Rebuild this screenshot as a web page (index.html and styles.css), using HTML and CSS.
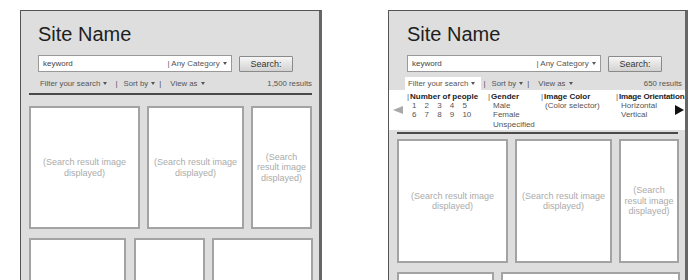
FILE: index.html
```
<!DOCTYPE html>
<html>
<head>
<meta charset="utf-8">
<title>Search wireframes</title>
<link rel="stylesheet" href="styles.css">
</head>
<body>
<div class="panel panel-left">
  <div class="head">
    <h1 class="site">Site Name</h1>
    <div class="search">
      <div class="input"><span class="kw">keyword</span><span class="cat">| Any Category <i class="caret"></i></span></div>
      <div class="btn">Search:</div>
    </div>
  </div>
  <div class="toolbar">
    <span class="tab">Filter your search <i class="caret"></i></span>
    <span class="sep">|</span>
    <span class="item">Sort by <i class="caret"></i></span>
    <span class="sep sep-tight">|</span>
    <span class="item">View as <i class="caret"></i></span>
    <span class="count">1,500 results</span>
  </div>
  <div class="rule"></div>
  <div class="row row1">
    <div class="card"><span>(Search result image displayed)</span></div>
    <div class="card"><span>(Search result image displayed)</span></div>
    <div class="card"><span>(Search result image displayed)</span></div>
  </div>
  <div class="row row2">
    <div class="card"></div>
    <div class="card"></div>
    <div class="card"></div>
  </div>
</div>

<div class="panel panel-right">
  <div class="head">
    <h1 class="site">Site Name</h1>
    <div class="search">
      <div class="input"><span class="kw">keyword</span><span class="cat">| Any Category <i class="caret"></i></span></div>
      <div class="btn">Search:</div>
    </div>
  </div>
  <div class="toolbar">
    <span class="tab tab-open">Filter your search <i class="caret"></i></span>
    <span class="sep">|</span>
    <span class="item">Sort by <i class="caret"></i></span>
    <span class="sep sep-tight">|</span>
    <span class="item">View as <i class="caret"></i></span>
    <span class="count">650 results</span>
  </div>
  <div class="filters">
    <i class="arrow-left"></i>
    <div class="fcol fcol-people">
      <div class="fhead"><span class="bar">|</span>Number of people</div>
      <div class="nums">
        <span>1</span><span>2</span><span>3</span><span>4</span><span>5</span>
        <span>6</span><span>7</span><span>8</span><span>9</span><span>10</span>
      </div>
    </div>
    <div class="fcol fcol-gender">
      <div class="fhead"><span class="bar">|</span>Gender</div>
      <div class="fitem">Male</div>
      <div class="fitem">Female</div>
      <div class="fitem">Unspecified</div>
    </div>
    <div class="fcol fcol-color">
      <div class="fhead"><span class="bar">|</span>Image Color</div>
      <div class="fitem">(Color selector)</div>
    </div>
    <div class="fcol fcol-orient">
      <div class="fhead"><span class="bar">|</span>Image Orientation</div>
      <div class="fitem">Horizontal</div>
      <div class="fitem">Vertical</div>
    </div>
    <i class="arrow-right"></i>
  </div>
  <div class="rule"></div>
  <div class="row row1">
    <div class="card"><span>(Search result image displayed)</span></div>
    <div class="card"><span>(Search result image displayed)</span></div>
    <div class="card"><span>(Search result image displayed)</span></div>
  </div>
  <div class="row row2">
    <div class="card"></div>
    <div class="card"></div>
  </div>
</div>
</body>
</html>
```
FILE: styles.css
```
html, body {
  margin: 0;
  padding: 0;
  background: #ffffff;
}
body {
  width: 700px;
  height: 280px;
  overflow: hidden;
  display: flex;
  align-items: flex-start;
  gap: 66px;
  padding: 10px 0 0 20px;
  box-sizing: border-box;
  font-family: "Liberation Sans", Arial, sans-serif;
  color: #333;
}
.panel {
  box-sizing: border-box;
  height: 300px;
  flex: none;
  background: #dedede;
  border: 1px solid #555;
  border-right: 3px solid #666;
  display: flex;
  flex-direction: column;
}
.panel > * { flex: none; }
.panel-left { width: 302px; }
.panel-right { width: 300px; }

.head {
  padding: 11px 0 0 17px;
}
.panel-right .head { padding-left: 18px; }
.site {
  margin: 0;
  font-size: 20px;
  line-height: 24px;
  font-weight: normal;
  color: #1e1e1e;
}
.search {
  display: flex;
  align-items: flex-start;
  gap: 7px;
  margin-top: 9px;
}
.input {
  box-sizing: border-box;
  width: 194px;
  height: 17px;
  background: #fff;
  border: 1px solid #999;
  display: flex;
  align-items: center;
  justify-content: space-between;
  padding: 0 4px;
  font-size: 8px;
  color: #444;
}
.cat { color: #555; }
.caret {
  display: inline-block;
  width: 0;
  height: 0;
  border-left: 2.5px solid transparent;
  border-right: 2.5px solid transparent;
  border-top: 3px solid #555;
  vertical-align: 1px;
  margin-left: 1px;
}
.btn {
  box-sizing: border-box;
  margin-top: 1px;
  width: 54px;
  height: 16px;
  border: 1px solid #8a8a8a;
  border-radius: 1px;
  background: linear-gradient(#f6f6f6, #d2d2d2);
  font-size: 9px;
  line-height: 14px;
  text-align: center;
  color: #333;
}

.toolbar {
  display: flex;
  align-items: center;
  margin-top: 5px;
  height: 13px;
  padding: 0 7px 0 16px;
  font-size: 7.8px;
  color: #555;
}
.panel-right .toolbar { padding-right: 3px; }
.tab {
  height: 13px;
  line-height: 13px;
  padding: 0 3px;
}
.tab-open { background: #fff; padding-right: 6px; }
.sep { margin: 0 6px 0 5px; }
.panel-right .tab-open + .sep { margin-left: 2px; }
.sep-tight { margin: 0 9px 0 4px; }
.count { margin-left: auto; }

.rule {
  height: 2px;
  background: #4a4a4a;
  margin: 3px 7px 0 8px;
}

.row {
  display: grid;
  padding-left: 8px;
  column-gap: 7px;
}
.panel-left .row1 {
  margin-top: 11px;
  height: 123px;
  grid-template-columns: 111px 97px 61px;
}
.panel-left .row2 {
  margin-top: 9px;
  height: 120px;
  grid-template-columns: 97px 71px 101px;
  column-gap: 7.5px;
}
.panel-right .rule { margin-top: 2px; }
.panel-right .row1 {
  margin-top: 5px;
  height: 124px;
  grid-template-columns: 111px 97px 60px;
}
.panel-right .row2 {
  margin-top: 9px;
  height: 100px;
  grid-template-columns: 97px 179px;
}
.card {
  box-sizing: border-box;
  background: #fff;
  border: 2px solid #a3a3a3;
  display: flex;
  align-items: center;
  justify-content: center;
  padding: 0 3px;
  text-align: center;
  font-size: 9px;
  line-height: 10.5px;
  color: #ababab;
}

.filters {
  position: relative;
  display: flex;
  align-items: flex-start;
  background: #fff;
  height: 40px;
  box-sizing: border-box;
  padding-top: 1.5px;
  font-size: 8px;
  line-height: 9.4px;
  color: #555;
}
.arrow-left {
  flex: none;
  width: 0;
  height: 0;
  margin: 14px 4px 0 4px;
  border-top: 4.5px solid transparent;
  border-bottom: 4.5px solid transparent;
  border-right: 10px solid #a8a8a8;
}
.fcol { flex: none; }
.fcol-people { width: 81px; }
.fcol-gender { width: 53px; }
.fcol-color { width: 75px; }
.fcol-orient { width: 68px; white-space: nowrap; }
.fhead {
  font-weight: bold;
  color: #222;
}
.fcol-orient .fhead { letter-spacing: -0.15px; }
.bar {
  font-weight: normal;
  color: #555;
  margin-right: 1px;
}
.fitem { padding-left: 5px; }
.fcol-color .fitem { padding-left: 4px; }
.nums {
  display: grid;
  grid-template-columns: repeat(5, 12.6px);
  padding-left: 5px;
}
.arrow-right {
  position: absolute;
  right: 1px;
  top: 15px;
  width: 0;
  height: 0;
  border-top: 5px solid transparent;
  border-bottom: 5px solid transparent;
  border-left: 9px solid #111;
}
```
